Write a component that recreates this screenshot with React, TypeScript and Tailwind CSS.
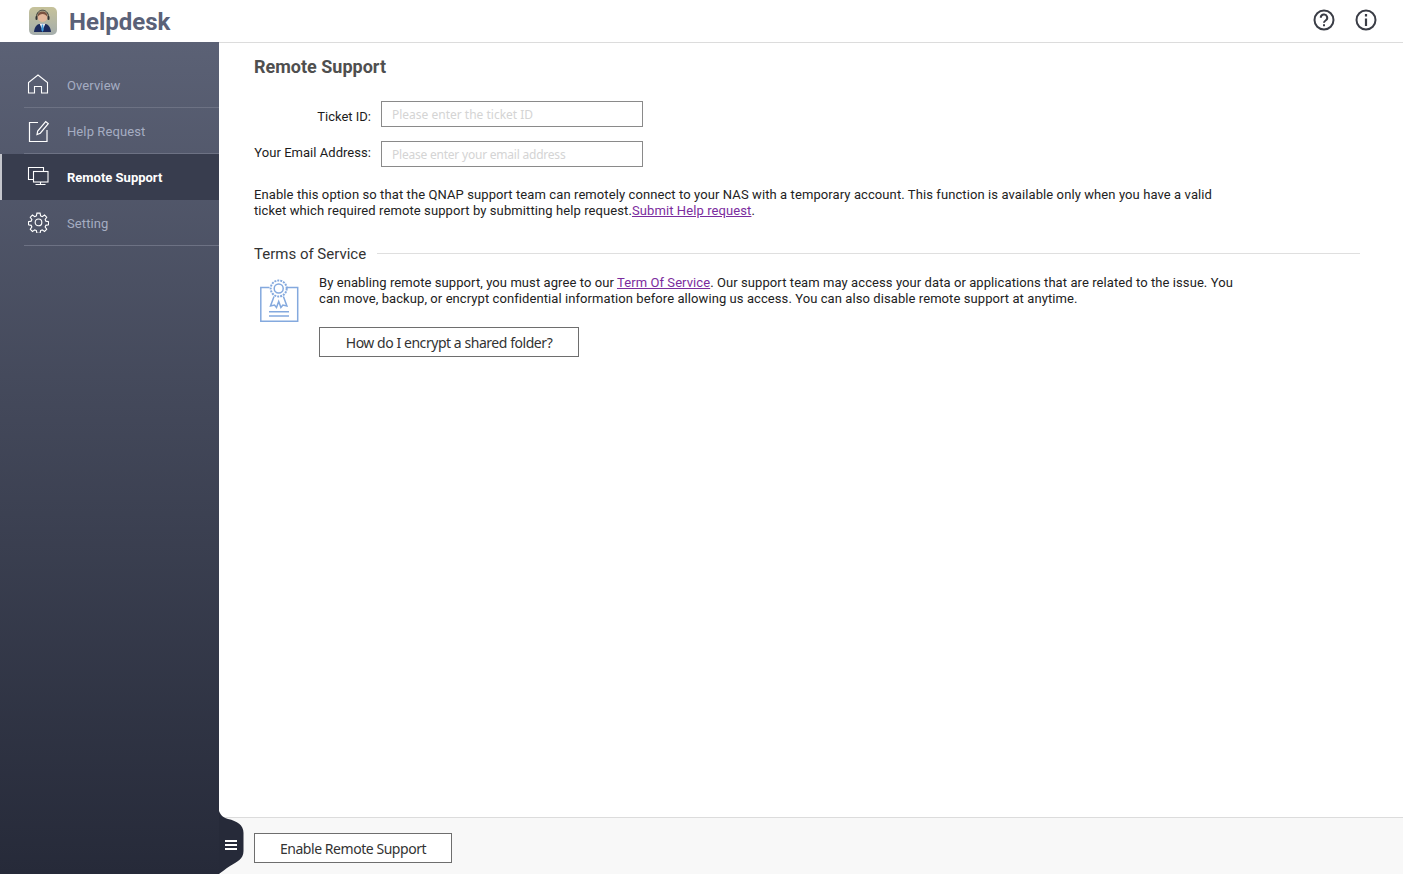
import type { ReactNode } from "react";

const HomeIcon = () => (
  <svg width="22" height="20" viewBox="0 0 22 20" fill="none" stroke="#fff" strokeWidth="1.1">
    <path d="M1.500 19V8.500L11 1l9.500 7.500V19h-6v-6.500h-7V19z" />
  </svg>
);

const EditIcon = () => (
  <svg width="22" height="26" viewBox="0 0 22 26" fill="none" stroke="#fff" strokeWidth="1.200">
    <path d="M11 5.500H2.500V24.500H20V13" />
    <path d="M10 17.500l.7-3.500 8-9.500 2.600 2.200-8 9.500z" />
  </svg>
);

const MonitorIcon = () => (
  <svg width="22" height="20" viewBox="0 0 22 20" fill="none" stroke="#fff" strokeWidth="1.100">
    <path d="M6 13.500H1.500V1.500H16.500V5.500" />
    <rect x="6.500" y="5.500" width="14.500" height="10.500" />
    <path d="M13.500 16V18.500M8.500 18.500H18.500" />
  </svg>
);

const GearIcon = () => (
  <svg width="21" height="23" viewBox="0 0 24 26" fill="none" stroke="#fff" strokeWidth="1.300">
    <g transform="translate(0 2)">
      <circle cx="12" cy="12" r="3.800" />
      <path d="M10.200 1.500h3.600l.6 3.100 1.900.8 2.600-1.800 2.500 2.500-1.800 2.600.8 1.900 3.100.6v3.600l-3.100.6-.8 1.900 1.800 2.600-2.500 2.500-2.600-1.800-1.900.8-.6 3.100h-3.600l-.6-3.100-1.900-.8-2.600 1.800-2.500-2.500 1.800-2.600-.8-1.900-3.100-.6v-3.600l3.100-.6.8-1.900-1.800-2.600 2.500-2.500 2.600 1.800 1.900-.8z" />
    </g>
  </svg>
);

const Logo = () => (
  <svg width="28" height="28" viewBox="0 0 28 28">
    <defs>
      <linearGradient id="logoBg" x1="0" y1="0" x2="0" y2="1">
        <stop offset="0" stopColor="#c6c29a" />
        <stop offset="1" stopColor="#a4adac" />
      </linearGradient>
    </defs>
    <rect width="28" height="28" rx="5" fill="url(#logoBg)" />
    <path d="M5 25c.5-6 3.500-8.500 8.500-8.500s8 2.500 8.500 8.500z" fill="#1c2a5c" />
    <path d="M10.500 16.500h6L13.500 23z" fill="#f4f4f4" />
    <path d="M12.800 17.500h1.400l.5 5.500-1.200 2-1.200-2z" fill="#3d9be0" />
    <circle cx="13.500" cy="10" r="5" fill="#e3b79b" />
    <path d="M8.500 10C8.500 6 10.500 4.500 13.500 4.500s5 1.500 5 5.500c-1.500-2-3-3-5-3s-3.500 1-5 3z" fill="#7a5240" />
    <path d="M7.500 10c0-9 12-9 12 0" fill="none" stroke="#333" strokeWidth="1" />
    <rect x="6.500" y="9" width="2" height="4" rx="1" fill="#333" />
    <rect x="18.500" y="9" width="2" height="4" rx="1" fill="#333" />
  </svg>
);

const Badge = () => (
  <svg width="40" height="44" viewBox="0 0 40 44" fill="none" stroke="#84a9de" strokeWidth="1.500">
    <path d="M9.500 8.500H.8V42.200H37.700V8.500H27" />
    <circle cx="18.700" cy="9.500" r="8" strokeDasharray="2 1" strokeWidth="2" />
    <circle cx="18.700" cy="9.500" r="4.500" />
    <path d="M14 17.500l-3.500 9.500 4-1 2 2.500 2.200-6 2.200 6 2-2.500 4 1-3.500-9.500" />
    <path d="M9 32.700H29M9 37H29" />
  </svg>
);

function NavItem({ icon, label, active }: { icon: ReactNode; label: string; active?: boolean }) {
  return (
    <div className={active ? "h-[46px] flex bg-[#383d4e] border-l-2 border-[#c4c6cc]" : "h-[46px] flex pl-[24px]"}>
      {active && <div className="w-[22px]" />}
      <div className={active ? "flex-1 flex items-center" : "flex-1 flex items-center border-b border-[#6d7284]"}>
        <span className="w-[28px] flex justify-center -translate-y-[1px]">{icon}</span>
        <span className={active ? "ml-[15px] pt-[2px] text-[13px] font-bold text-white" : "ml-[15px] pt-[2px] text-[13px] tracking-[0.1px] text-[#a5adc2]"}>{label}</span>
      </div>
    </div>
  );
}

export default function App() {
  return (
    <div className="h-[874px] w-[1403px] overflow-hidden relative bg-white font-['Roboto',sans-serif] text-[13px] text-[#222]">
      <header className="h-[43px] flex items-center border-b border-[#dcdcdc] pl-[29px] pr-[26px]">
        <Logo />
        <h1 className="ml-[12px] text-[24px] font-bold text-[#5a6178] leading-none pt-[1px]">Helpdesk</h1>
        <div className="ml-auto flex gap-[20px] items-center text-[#3a3d46] -translate-y-[1px]">
          <svg width="22" height="22" viewBox="0 0 22 22" fill="none" stroke="currentColor">
            <circle cx="11" cy="11" r="9.500" strokeWidth="2" />
            <path d="M7.800 8.800a3.200 3.200 0 1 1 4.800 2.700c-1 .6-1.600 1-1.600 2.200" strokeWidth="2" />
            <path d="M11 15.200v2" strokeWidth="2" />
          </svg>
          <svg width="22" height="22" viewBox="0 0 22 22" fill="none" stroke="currentColor">
            <circle cx="11" cy="11" r="9.500" strokeWidth="2" />
            <path d="M11 9.500v7.500M11 5v2.500" strokeWidth="2.200" />
          </svg>
        </div>
      </header>

      <div className="flex h-[831px]">
        <aside className="w-[219px] shrink-0 -mt-[1px] pt-[20px] bg-gradient-to-b from-[#5b6175] to-[#262a39]">
          <NavItem icon={<HomeIcon />} label="Overview" />
          <NavItem icon={<EditIcon />} label="Help Request" />
          <NavItem icon={<MonitorIcon />} label="Remote Support" active />
          <NavItem icon={<GearIcon />} label="Setting" />
        </aside>

        <main className="flex-1 flex flex-col min-w-0">
          <div className="flex-1 pl-[35px] pr-[43px]">
            <h2 className="pt-[12px] text-[18px] font-bold text-[#4f4f4f] leading-[24px]">Remote Support</h2>

            <div className="mt-[22px] flex items-center">
              <label className="w-[117px] whitespace-nowrap text-right pt-[6px] text-[13px] text-[#1c1c1c]">Ticket ID:</label>
              <input
                placeholder="Please enter the ticket ID"
                className="ml-[10px] w-[262px] h-[26px] border border-[#8a8a8a] px-[10px] text-[12px] font-['Noto_Sans',sans-serif] placeholder:text-[#d4d4d4]"
              />
            </div>
            <div className="mt-[14px] flex items-center">
              <label className="w-[117px] whitespace-nowrap text-right -mt-[3px] text-[13px] tracking-[0.04px] text-[#1c1c1c]">Your Email Address:</label>
              <input
                placeholder="Please enter your email address"
                className="ml-[10px] w-[262px] h-[26px] border border-[#8a8a8a] px-[10px] text-[12px] font-['Noto_Sans',sans-serif] tracking-[-0.22px] placeholder:text-[#d4d4d4]"
              />
            </div>

            <p className="mt-[20px] w-[980px] leading-[16px] tracking-[0.095px]">
              Enable this option so that the QNAP support team can remotely connect to your NAS with a temporary account. This function is available only when you have a valid ticket which required remote support by submitting help request.
              <a className="text-[#7b2c9e] underline">Submit Help request</a>.
            </p>

            <div className="mt-[25px] flex items-center gap-[11px]">
              <h3 className="text-[15px] text-[#333] leading-[20px]">Terms of Service</h3>
              <div className="flex-1 h-px mb-[2px] bg-[#dfdfdf]" />
            </div>

            <div className="mt-[11px] flex">
              <div className="w-[65px] pl-[6px] pt-[4px] shrink-0">
                <Badge />
              </div>
              <div>
                <p className="w-[930px] leading-[16px] tracking-[0.08px]">
                  By enabling remote support, you must agree to our <a className="text-[#7b2c9e] underline">Term Of Service</a>. Our support team may access your data or applications that are related to the issue. You can move, backup, or encrypt confidential information before allowing us access. You can also disable remote support at anytime.
                </p>
                <button className="mt-[20px] w-[260px] h-[30px] border border-[#6e6e6e] text-[14px] tracking-[-0.45px] font-['Noto_Sans',sans-serif] text-[#333]">
                  How do I encrypt a shared folder?
                </button>
              </div>
            </div>
          </div>

          <footer className="h-[57px] bg-[#f8f8f8] border-t border-[#dcdcdc] pl-[35px] pt-[15px]">
            <button className="w-[198px] h-[30px] bg-white border border-[#6e6e6e] text-[14px] tracking-[-0.45px] font-['Noto_Sans',sans-serif] text-[#333]">
              Enable Remote Support
            </button>
          </footer>
        </main>
      </div>

      {/* sidebar toggle tab */}
      <svg className="absolute left-[219px] top-[811px]" width="25" height="63" viewBox="0 0 25 63" fill="#262a39">
        <path d="M0 0C2 5 5 7 9 8C18 10 24.500 14 24.500 22V40C24.500 48 18 51 11 55C6 58 3 61 0 63Z" />
      </svg>
      <div className="absolute left-[225px] top-[840px] w-[12px] flex flex-col gap-[2px]">
        <span className="h-[2px] bg-white" />
        <span className="h-[2px] bg-white" />
        <span className="h-[2px] bg-white" />
      </div>
    </div>
  );
}
